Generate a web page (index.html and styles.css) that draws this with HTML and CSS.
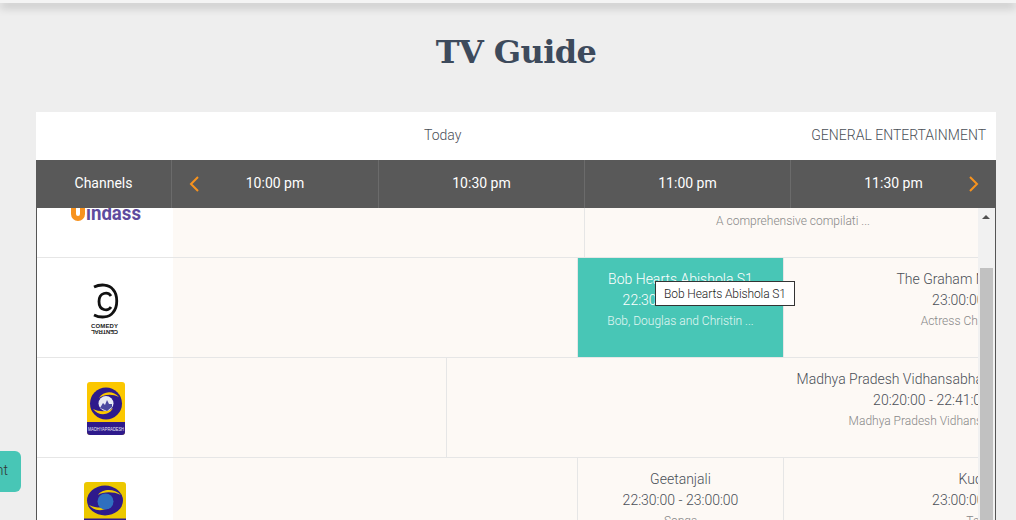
FILE: index.html
```html
<!DOCTYPE html>
<html lang="en">
<head>
  <meta charset="UTF-8" />
  <meta name="viewport" content="width=device-width, initial-scale=1.0"/>
  <title>TV Guide</title>
  <link rel="stylesheet" href="styles.css">
</head>
<body>
  <div class="topbar"></div>
  <h1>TV Guide</h1>

  <div class="guide">
    <div class="guide-head">
      <div class="today">Today</div>
      <div class="genre">GENERAL ENTERTAINMENT</div>
    </div>

    <div class="timebar">
      <div class="channels-label">Channels</div>
      <div class="slot slot-first">10:00 pm</div>
      <div class="slot">10:30 pm</div>
      <div class="slot">11:00 pm</div>
      <div class="slot slot-last">11:30 pm</div>
      <svg class="arrow arrow-prev" width="10" height="16" viewBox="0 0 10 16"><path d="M9 1 2 8l7 7" /></svg>
      <svg class="arrow arrow-next" width="10" height="16" viewBox="0 0 10 16"><path d="M1 1l7 7-7 7" /></svg>
    </div>

    <div class="schedule">
      <div class="rows">
        <!-- first row is scrolled half out of view -->
        <div class="row row-first">
          <div class="channel">
            <svg width="72" height="28" viewBox="0 0 72 28">
              <path class="bindass-u" d="M4.500 6v14a4.500 4.500 0 0 0 9 0V6" />
              <text class="bindass-text" x="17" y="26" textLength="55" lengthAdjust="spacingAndGlyphs">indass</text>
            </svg>
          </div>
          <div class="blank w-411"></div>
          <div class="program w-417">
            <div class="name">Bindass Hits</div>
            <div class="time">22:00:00 - 23:30:00</div>
            <div class="desc">A comprehensive compilati ...</div>
          </div>
        </div>

        <div class="row">
          <div class="channel">
            <svg width="40" height="60" viewBox="0 0 40 60">
              <path class="cc-line" d="M9 9C15 6 24 6 28 11.500C33 17 33 29 28 34.500C24 40 15 40 9 37" />
              <path class="cc-line" d="M26 18C23 13.500 14 14 14 23.500C14 33 23 33.500 26 29" />
              <text class="cc-text" x="6" y="50" textLength="27">COMEDY</text>
              <text class="cc-text" x="6" y="50" textLength="27" transform="rotate(180 19.500 51)">CENTRAL</text>
            </svg>
          </div>
          <div class="blank w-404"></div>
          <div class="program program-active w-206">
            <div class="name">Bob Hearts Abishola S1</div>
            <div class="time">22:30:00 - 23:00:00</div>
            <div class="desc">Bob, Douglas and Christin ...</div>
            <div class="tooltip">Bob Hearts Abishola S1</div>
          </div>
          <div class="program w-413">
            <div class="name">The Graham Norton Show S26</div>
            <div class="time">23:00:00 - 23:30:00</div>
            <div class="desc">Actress Charlize Theron, ...</div>
          </div>
        </div>

        <div class="row">
          <div class="channel">
            <svg width="40" height="55" viewBox="0 0 40 55">
              <rect x="2" y="2" width="38" height="53" rx="3" fill="#fbc700" />
              <path d="M2 42h38v10a3 3 0 0 1-3 3H5a3 3 0 0 1-3-3z" fill="#2e1a8c" />
              <circle cx="21" cy="23.500" r="16" fill="#2e1a8c" />
              <path d="M8 29c6 8 17 6 20-1-3 3-12 5-20 1z" fill="#fbc700" />
              <path d="M34 17C28 10 18 11 14 18c4-3 12-5 20-1z" fill="#fbc700" />
              <circle cx="21" cy="23.500" r="7.500" fill="#e8ecf4" />
              <path d="M15 28l3-5 2 2 2-5 2 4 3 0 0 3-5 4z" fill="#4a4aa0" />
              <text class="dd-text" x="21" y="51" text-anchor="middle" textLength="36" lengthAdjust="spacingAndGlyphs">MADHYAPRADESH</text>
            </svg>
          </div>
          <div class="blank w-273"></div>
          <div class="program w-969">
            <div class="name">Madhya Pradesh Vidhansabha Live Telecast</div>
            <div class="time">20:20:00 - 22:41:00</div>
            <div class="desc">Madhya Pradesh Vidhansabh ...</div>
          </div>
        </div>

        <div class="row">
          <div class="channel">
            <svg width="44" height="54" viewBox="0 0 44 54">
              <rect x="1" y="1" width="42" height="52" rx="3" fill="#ecc800" />
              <path d="M1 37.500h42V50a3 3 0 0 1-3 3H4a3 3 0 0 1-3-3z" fill="#2e1a8c" />
              <ellipse cx="22" cy="19.500" rx="18" ry="15" fill="#2e1a8c" />
              <path d="M6 24c7 8 18 6 22-1-4 4-13 5-22 1z" fill="#ecc800" />
              <path d="M38 14C31 7 19 8 15 14c5-3 14-4 23 0z" fill="#ecc800" />
              <circle cx="22.500" cy="20.500" r="8" fill="#2f6fc0" />
            </svg>
          </div>
          <div class="blank w-404"></div>
          <div class="program w-206">
            <div class="name">Geetanjali</div>
            <div class="time">22:30:00 - 23:00:00</div>
            <div class="desc">Songs</div>
          </div>
          <div class="program w-413">
            <div class="name">Kuch Baat</div>
            <div class="time">23:00:00 - 23:30:00</div>
            <div class="desc">Tele Film</div>
          </div>
        </div>
      </div>

      <div class="scrollbar">
        <div class="scroll-up"></div>
        <div class="scroll-thumb"></div>
      </div>
    </div>
  </div>

  <div class="side-tab">Comment</div>
</body>
</html>
```

FILE: styles.css
```css
html, body {
  height: 520px;
  overflow: hidden;
}

body {
  margin: 0;
  background-color: #eeeeee;
  font-family: Roboto, "Liberation Sans", sans-serif;
  font-weight: 300;
  color: #4a4f57;
  position: relative;
}

.topbar {
  height: 3px;
  background-color: #f4f4f4;
  box-shadow: 0 3px 10px rgba(0, 0, 0, 0.4);
}

h1 {
  margin: 0;
  height: 109px;
  padding: 29px 0 0 16px;
  box-sizing: border-box;
  text-align: center;
  font-family: "DejaVu Serif", serif;
  font-size: 32px;
  font-weight: 700;
  letter-spacing: -0.6px;
  line-height: 40px;
  color: #3d4a5c;
}

.guide {
  margin: 0 20px 0 36px;
}

.guide-head {
  display: flex;
  justify-content: space-between;
  height: 48px;
  padding-bottom: 2px;
  box-sizing: border-box;
  align-items: center;
  background-color: white;
  font-size: 14px;
}

.today {
  padding-left: 388px;
}

.genre {
  padding-right: 10px;
  white-space: nowrap;
}

.timebar {
  display: flex;
  height: 48px;
  position: relative;
  background-color: #595959;
  color: white;
  font-size: 14px;
  font-weight: 400;
  line-height: 46px;
}

.channels-label {
  width: 136px;
  text-align: center;
  box-sizing: border-box;
  border-right: 1px solid #6b6b6b;
}

.slot {
  width: 206px;
  text-align: center;
  box-sizing: border-box;
  border-right: 1px solid #6b6b6b;
}

.slot-first {
  width: 207px;
}

.slot-last {
  width: 205px;
  border-right: none;
}

.arrow {
  position: absolute;
  top: 16px;
}

.arrow path {
  fill: none;
  stroke: #f7931e;
  stroke-width: 2;
}

.arrow-prev {
  left: 153px;
}

.arrow-next {
  right: 17px;
}

.schedule {
  display: flex;
  height: 312px;
  border-left: 1px solid #555;
  border-right: 1px solid #555;
  overflow: hidden;
}

.rows {
  width: 941px;
  flex: none;
  overflow: hidden;
  background-color: #fdf9f5;
}

.row {
  display: flex;
  height: 100px;
  box-sizing: border-box;
  border-bottom: 1px solid #e6e6e6;
}

.row-first {
  margin-top: -50px;
}

.channel {
  width: 136px;
  flex: none;
  display: flex;
  align-items: center;
  justify-content: center;
  background-color: white;
}

.blank {
  flex: none;
}

.program {
  flex: none;
  box-sizing: border-box;
  position: relative;
  padding-top: 11px;
  border-left: 1px solid #e6e6e6;
  text-align: center;
  font-size: 14px;
  line-height: 21px;
  white-space: nowrap;
}

.desc {
  font-size: 12px;
  color: #888;
}

.program-active {
  background-color: #48c6b6;
  color: white;
}

.program-active .desc {
  color: #e2f6f3;
}

.tooltip {
  position: absolute;
  z-index: 1;
  left: 77px;
  top: 23px;
  width: 140px;
  height: 25px;
  box-sizing: border-box;
  border: 1px solid #333;
  background-color: white;
  color: #222;
  font-size: 12px;
  font-weight: 300;
  letter-spacing: -0.1px;
  line-height: 24px;
}

.w-206 { width: 206px; }
.w-273 { width: 273px; }
.w-404 { width: 404px; }
.w-411 { width: 411px; }
.w-413 { width: 413px; }
.w-417 { width: 417px; }
.w-969 { width: 969px; }

.scrollbar {
  flex: 1;
  position: relative;
  background-color: #f1f1f1;
}

.scroll-up {
  position: absolute;
  left: 4px;
  top: 7px;
  border-left: 4px solid transparent;
  border-right: 4px solid transparent;
  border-bottom: 4px solid #505050;
}

.scroll-thumb {
  position: absolute;
  left: 2px;
  right: 2px;
  top: 60px;
  bottom: 0;
  background-color: #c1c1c1;
}

.bindass-u {
  fill: none;
  stroke: #f7921e;
  stroke-width: 5;
}

.bindass-text {
  font-family: Roboto, sans-serif;
  font-size: 20px;
  font-weight: 700;
  fill: #5e4b9e;
}

.cc-line {
  fill: none;
  stroke: #111;
  stroke-width: 2.800;
}

.cc-text {
  font-family: "Liberation Sans", sans-serif;
  font-size: 6px;
  font-weight: 700;
  fill: #222;
}

.dd-text {
  font-family: "Liberation Sans", sans-serif;
  font-size: 5px;
  fill: #e6e6f5;
}

.side-tab {
  position: absolute;
  left: -61px;
  top: 451px;
  width: 82px;
  height: 41px;
  box-sizing: border-box;
  padding-right: 13px;
  text-align: right;
  background-color: #48c6b6;
  border-radius: 6px;
  color: #333;
  font-size: 14px;
  line-height: 38px;
}
```
